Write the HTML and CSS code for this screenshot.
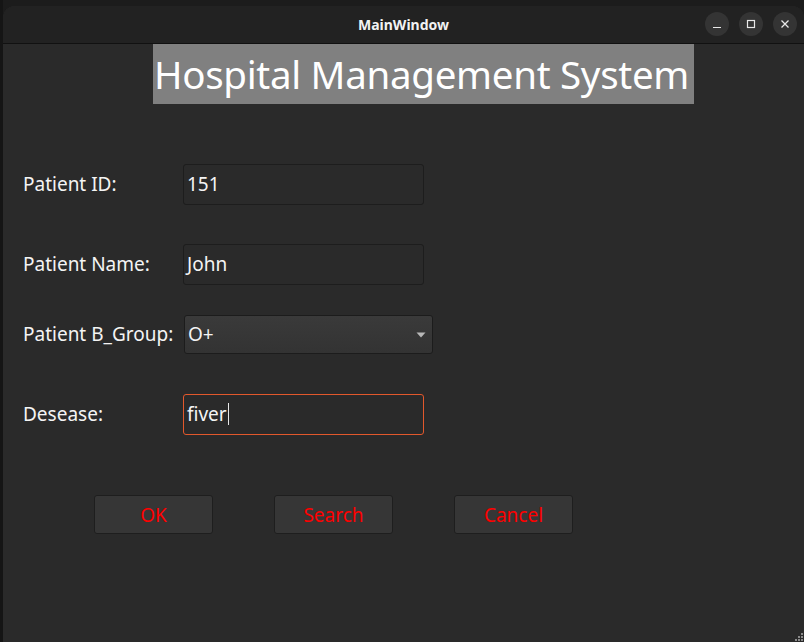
FILE: index.html
```html
<!DOCTYPE html>
<html>
<head>
<meta charset="utf-8">
<link rel="stylesheet" href="styles.css">
</head>
<body>
<div class="desktop">
  <div class="edge"></div>
  <div class="window">
    <div class="titlebar">
      <span class="title">MainWindow</span>
      <div class="controls">
        <span class="ctl"><svg width="24" height="24" viewBox="0 0 24 24"><path d="M8 15.5h8" stroke="#e8e8e8" stroke-width="1.2"/></svg></span>
        <span class="ctl"><svg width="24" height="24" viewBox="0 0 24 24"><rect x="8.5" y="8.5" width="7" height="7" fill="none" stroke="#e8e8e8" stroke-width="1.2"/></svg></span>
        <span class="ctl"><svg width="24" height="24" viewBox="0 0 24 24"><path d="M8.5 8.5l7 7M15.5 8.5l-7 7" stroke="#e8e8e8" stroke-width="1.3"/></svg></span>
      </div>
    </div>
    <div class="content">
      <div class="heading-row"><h1 class="heading">Hospital Management System</h1></div>
      <div class="form">
        <div class="row r1">
          <label class="lbl">Patient ID:</label>
          <div class="input">151</div>
        </div>
        <div class="row r2">
          <label class="lbl">Patient Name:</label>
          <div class="input">John</div>
        </div>
        <div class="row r3">
          <label class="lbl">Patient B_Group:</label>
          <div class="combo"><span>O+</span><svg class="arrow" width="10" height="6" viewBox="0 0 10 6"><path d="M0.5 0.5h9L5 5.5z" fill="#b8b8b8"/></svg></div>
        </div>
        <div class="row r4">
          <label class="lbl">Desease:</label>
          <div class="input focus">fiver<span class="caret"></span></div>
        </div>
      </div>
      <div class="buttons">
        <button class="btn">OK</button>
        <button class="btn">Search</button>
        <button class="btn">Cancel</button>
      </div>
      <div class="grip">
        <svg width="8" height="8" viewBox="0 0 8 8" fill="#8a8a8a"><rect x="6" y="0" width="2" height="2"/><rect x="3" y="3" width="2" height="2"/><rect x="6" y="3" width="2" height="2"/><rect x="0" y="6" width="2" height="2"/><rect x="3" y="6" width="2" height="2"/><rect x="6" y="6" width="2" height="2"/></svg>
      </div>
    </div>
  </div>
</div>
</body>
</html>
```

FILE: styles.css
```css
* { box-sizing: border-box; }
html, body { margin: 0; padding: 0; }
body {
  width: 804px;
  height: 642px;
  overflow: hidden;
  background: #1c1c1c;
  font-family: "Noto Sans", "DejaVu Sans", sans-serif;
}
.desktop {
  display: flex;
  height: 642px;
}
.edge {
  width: 3px;
  background: #151515;
}
.window {
  flex: 1;
  margin-top: 6px;
  display: flex;
  flex-direction: column;
  background: #2a2a2a;
  border-radius: 12px 12px 0 0;
  overflow: hidden;
}
.titlebar {
  height: 38px;
  background: #222222;
  border-bottom: 1px solid #111111;
  display: flex;
  align-items: center;
  justify-content: center;
  position: relative;
  flex-shrink: 0;
}
.title {
  color: #f2f2f2;
  font-size: 14px;
  font-weight: 700;
}
.controls {
  position: absolute;
  right: 7px;
  top: 6px;
  display: flex;
  gap: 10px;
}
.ctl {
  width: 24px;
  height: 24px;
  border-radius: 50%;
  background: #343434;
  display: flex;
}
.content {
  flex: 1;
  position: relative;
  display: flex;
  flex-direction: column;
}
.heading-row {
  display: flex;
  padding-left: 150px;
}
.heading {
  margin: 0;
  width: 541px;
  height: 60px;
  background: #808080;
  color: #ffffff;
  font-weight: 400;
  font-size: 38.5px;
  line-height: 60px;
  text-align: center;
  white-space: nowrap;
  letter-spacing: -0.3px;
  padding-right: 4px;
}
.form {
  display: flex;
  flex-direction: column;
  padding-left: 20px;
  margin-top: 60px;
}
.row {
  display: flex;
  align-items: center;
  height: 40px;
}
.r2 { margin-top: 40px; }
.r3 { margin-top: 30px; }
.r4 { margin-top: 40px; }
.lbl {
  width: 160px;
  color: #f4f4f4;
  font-size: 19px;
  letter-spacing: 0;
}
.input {
  width: 241px;
  height: 41px;
  border: 1px solid #1d1d1d;
  border-radius: 3px;
  background: #2a2a2a;
  color: #f4f4f4;
  font-size: 19px;
  display: flex;
  align-items: center;
  padding-left: 3px;
}
.input.focus {
  border-color: #e2582c;
}
.caret {
  display: inline-block;
  width: 1px;
  height: 22px;
  background: #e8e8e8;
  margin-left: 1px;
}
.combo {
  width: 249px;
  height: 39px;
  margin-left: 1px;
  border: 1px solid #1c1c1c;
  border-radius: 3px;
  background: linear-gradient(#3a3a3a, #333333);
  color: #f4f4f4;
  font-size: 19px;
  display: flex;
  align-items: center;
  justify-content: space-between;
  padding: 0 6px 0 3px;
}
.arrow { margin-top: 1px; }
.buttons {
  display: flex;
  gap: 61px;
  padding-left: 91px;
  margin-top: 61px;
}
.btn {
  width: 119px;
  height: 39px;
  border: 1px solid #1e1e1e;
  border-radius: 3px;
  background: #363636;
  color: #ff0000;
  font-family: "Noto Sans", "DejaVu Sans", sans-serif;
  font-size: 19px;
  padding: 0;
}
.grip {
  position: absolute;
  right: 1px;
  bottom: 1px;
  display: flex;
}
```
